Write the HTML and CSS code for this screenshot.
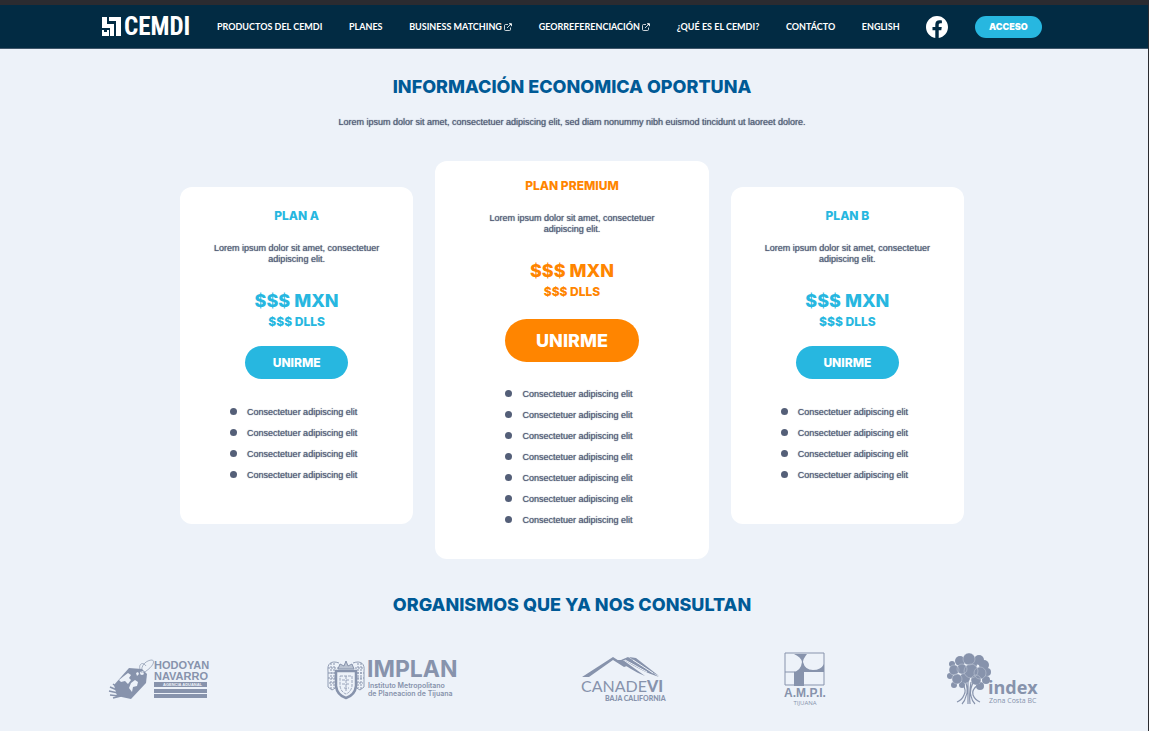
FILE: index.html
```html
<!DOCTYPE html>
<html lang="es">
<head>
<meta charset="utf-8">
<meta name="viewport" content="width=device-width, initial-scale=1">
<title>CEMDI - Planes</title>
<link rel="stylesheet" href="styles.css">
</head>
<body>
<svg class="defs" aria-hidden="true">
  <symbol id="external" viewBox="0 0 16 16">
    <path d="M8 3H3a2 2 0 0 0-2 2v8a2 2 0 0 0 2 2h8a2 2 0 0 0 2-2V9M6 10l8-8M10 1.500h5v5" fill="none" stroke="currentColor" stroke-width="1.600"/>
    <path d="M10 1h5v5z" fill="currentColor"/>
  </symbol>
</svg>
<header class="site-header">
  <nav class="nav" aria-label="Principal">
    <a class="brand" href="#" aria-label="CEMDI">
      <svg class="brand-mark" viewBox="0 0 20 20" aria-hidden="true">
        <path d="M0 0h5v7h7v12H8v-8H0zM7 0h12v19h-5V4H7zM0 13h2v2h3v-2h2v6H0z" fill="currentColor"/>
      </svg>
      <span class="brand-name">CEMDI</span>
    </a>
    <a class="nav-link" href="#">PRODUCTOS DEL CEMDI</a>
    <a class="nav-link" href="#">PLANES</a>
    <a class="nav-link" href="#">BUSINESS MATCHING <svg class="ext"><use href="#external"/></svg></a>
    <a class="nav-link" href="#">GEORREFERENCIACIÓN <svg class="ext"><use href="#external"/></svg></a>
    <a class="nav-link" href="#">¿QUÉ ES EL CEMDI?</a>
    <a class="nav-link" href="#">CONTÁCTO</a>
    <a class="nav-link" href="#">ENGLISH</a>
    <a class="social" href="#" aria-label="Facebook">
      <svg viewBox="0 0 24 24" aria-hidden="true"><path fill="currentColor" d="M24 12.073C24 5.446 18.627 0 12 0S0 5.446 0 12.073c0 6.026 4.388 11.020 10.125 11.927v-8.437H7.078v-3.490h3.047V9.413c0-3.026 1.792-4.697 4.533-4.697 1.312 0 2.686.236 2.686.236v2.971h-1.513c-1.491 0-1.956.931-1.956 1.886v2.264h3.328l-.532 3.490h-2.796V24C19.612 23.093 24 18.099 24 12.073z"/></svg>
    </a>
    <button class="access" type="button">ACCESO</button>
  </nav>
</header>

<main class="page">
  <h1 class="heading">INFORMACIÓN ECONOMICA OPORTUNA</h1>
  <p class="intro">Lorem ipsum dolor sit amet, consectetuer adipiscing elit, sed diam nonummy nibh euismod tincidunt ut laoreet dolore.</p>

  <section class="plans" aria-label="Planes">
    <article class="card">
      <h2 class="card-title">PLAN A</h2>
      <p class="card-text">Lorem ipsum dolor sit amet, consectetuer adipiscing elit.</p>
      <p class="price">$$$ MXN</p>
      <p class="price-alt">$$$ DLLS</p>
      <button class="join" type="button">UNIRME</button>
      <ul class="features">
        <li>Consectetuer adipiscing elit</li>
        <li>Consectetuer adipiscing elit</li>
        <li>Consectetuer adipiscing elit</li>
        <li>Consectetuer adipiscing elit</li>
      </ul>
    </article>
    <article class="card card-premium">
      <h2 class="card-title">PLAN PREMIUM</h2>
      <p class="card-text">Lorem ipsum dolor sit amet, consectetuer adipiscing elit.</p>
      <p class="price">$$$ MXN</p>
      <p class="price-alt">$$$ DLLS</p>
      <button class="join" type="button">UNIRME</button>
      <ul class="features">
        <li>Consectetuer adipiscing elit</li>
        <li>Consectetuer adipiscing elit</li>
        <li>Consectetuer adipiscing elit</li>
        <li>Consectetuer adipiscing elit</li>
        <li>Consectetuer adipiscing elit</li>
        <li>Consectetuer adipiscing elit</li>
        <li>Consectetuer adipiscing elit</li>
      </ul>
    </article>
    <article class="card">
      <h2 class="card-title">PLAN B</h2>
      <p class="card-text">Lorem ipsum dolor sit amet, consectetuer adipiscing elit.</p>
      <p class="price">$$$ MXN</p>
      <p class="price-alt">$$$ DLLS</p>
      <button class="join" type="button">UNIRME</button>
      <ul class="features">
        <li>Consectetuer adipiscing elit</li>
        <li>Consectetuer adipiscing elit</li>
        <li>Consectetuer adipiscing elit</li>
        <li>Consectetuer adipiscing elit</li>
      </ul>
    </article>
  </section>

  <h2 class="heading">ORGANISMOS QUE YA NOS CONSULTAN</h2>

  <section class="partners" aria-label="Organismos">
    <svg class="partner" width="100" height="56" viewBox="0 0 100 56" role="img" aria-label="Hodoyan Navarro">
      <path d="M20 16L33 17 38 22 37 31 22 47 8 44 5 33z" fill="currentColor"/>
      <path d="M15 24l4-3 3 2-2 3 2 2-3 4-3-3-4 1-2-2zM22 31l4-3 3 2-1 4-4 1-1 5-3-4zM27 21l2-1 1 2-2 2z" fill="#edf2f9"/>
      <circle cx="33" cy="21" r="2" fill="#edf2f9"/>
      <path d="M33 21C31 13 38 8 43 8c4 1 0 8-9 13M32 20C28 12 34 9 37 14" fill="none" stroke="currentColor" stroke-width=".7"/>
      <path d="M1 35l7 3M0 39l9 2M1 43l9 1M4 32l5 4M4 46l8-2" stroke="currentColor" stroke-width="1.500"/>
      <text x="45" y="17" class="t-bold" font-size="11">HODOYAN</text>
      <text x="45" y="28" class="t-bold" font-size="11">NAVARRO</text>
      <path d="M45 30h53v5H45zM45 37h53v4H45zM45 42h53v4H45z" fill="currentColor"/>
      <text x="54" y="34" class="t-bold t-light" font-size="4">AGENCIA ADUANAL</text>
    </svg>
    <svg class="partner" width="136" height="56" viewBox="0 0 136 56" role="img" aria-label="IMPLAN Instituto Metropolitano de Planeacion de Tijuana">
      <g fill="none" stroke="currentColor">
        <path d="M12 11C4 8 0 12 1 19v16l4 3 5-3M26 11c8-3 12 1 11 8v16l-4 3-5-3" stroke-width=".9"/>
        <path d="M1 16h10M1 21h8M1 26h8M2 31h7M28 16h9M30 21h7M30 26h7M29 31h7M4 11v26M7 11v25M31 11v25M34 11v26" stroke-dasharray="2 1"/>
        <path d="M9 19v15q1 9 10 12q9-3 10-12V19z" stroke-width="2.500"/>
        <path d="M13 24h12v10q-1 6-6 8q-5-2-6-8zM15 28h8M15 32h7M17 36h5M19 24v15" stroke-dasharray="3 1" stroke-width=".8"/>
        <path d="M11 17l2-5 4 2 2-5 2 5 4-2 2 5z" fill="currentColor" fill-opacity=".5"/>
      </g>
      <text x="40" y="25" class="t-heavy" font-size="23">IMPLAN</text>
      <text x="41" y="36" class="t-semi" font-size="7">Instituto Metropolitano</text>
      <text x="41" y="44" class="t-semi" font-size="7">de Planeacion de Tijuana</text>
    </svg>
    <svg class="partner" width="84" height="56" viewBox="0 0 84 56" role="img" aria-label="Canadevi Baja California">
      <path d="M1 25L32 5l14 9-3 1-11-7L8 25zM40 8l7-3 31 20C65 21 53 14 43 8zM48 5l7 1 23 18C68 19 58 12 48 5zM36 8l6 0 22 16C54 20 45 14 36 8z" fill="currentColor"/>
      <path d="M44 8l22 12M52 8l20 13" stroke="#edf2f9"/>
      <text x="0" y="40" class="t-geo" font-size="16">CANADE<tspan class="t-vi">VI</tspan></text>
      <text x="24" y="49" class="t-black" font-size="7">BAJA CALIFORNIA</text>
    </svg>
    <svg class="partner" width="44" height="56" viewBox="0 0 44 56" role="img" aria-label="A.M.P.I. Tijuana">
      <path d="M11 2h13Q20 7 20 10Q22 18 30 18Q38 18 41 12V20H21V34H11V20Q18 18 19 10Q18 5 11 2z" fill="currentColor"/>
      <path d="M2 1h39v32H2zM2 20h10" fill="none" stroke="currentColor"/>
      <text x="22" y="45" text-anchor="middle" class="t-bold" font-size="12">A.M.P.I.</text>
      <text x="22" y="53" text-anchor="middle" class="t-reg" font-size="6">TIJUANA</text>
    </svg>
    <svg class="partner" width="92" height="56" viewBox="0 0 92 56" role="img" aria-label="index Zona Costa BC">
      <g fill="currentColor">
        <circle cx="24" cy="7" r="6"/><circle cx="15" cy="9" r="5"/><circle cx="7" cy="12" r="3"/><circle cx="34" cy="8" r="5"/><circle cx="39" cy="13" r="5"/>
        <circle cx="9" cy="18" r="5"/><circle cx="17" cy="17" r="5"/><circle cx="26" cy="19" r="7"/><circle cx="35" cy="21" r="6"/><circle cx="42" cy="20" r="4"/>
        <circle cx="5" cy="24" r="3"/><circle cx="12" cy="27" r="5"/><circle cx="20" cy="26" r="5"/><circle cx="31" cy="28" r="5"/><circle cx="41" cy="28" r="4"/>
        <circle cx="9" cy="33" r="3"/><circle cx="17" cy="33" r="3"/><circle cx="35" cy="34" r="4"/><circle cx="28" cy="12" r="4"/>
      </g>
      <g fill="none" stroke="#edf2f9" stroke-width=".6" opacity=".5">
        <circle cx="26" cy="19" r="7"/><circle cx="17" cy="17" r="5"/><circle cx="35" cy="21" r="6"/><circle cx="24" cy="7" r="6"/><circle cx="9" cy="18" r="5"/><circle cx="31" cy="28" r="5"/><circle cx="12" cy="27" r="5"/>
      </g>
      <path d="M17 30q5 9 2 13q-2 5-7 7M20 28q4 11 1 16q-1 5-4 8M23 27v25M29 29q-5 9-3 15q1 5 4 8M34 32q-8 6-6 11q2 5 7 7M26 30q-2 12-1 22" fill="none" stroke="currentColor" stroke-width="1.200"/>
      <text x="43" y="42" class="t-open" font-size="18">index</text>
      <text x="44" y="51" class="t-reg" font-size="7">Zona Costa BC</text>
    </svg>
  </section>
</main>
</body>
</html>
```
FILE: styles.css
```css
:root {
  --navy: #022b43;
  --blue: #005a96;
  --cyan: #27b7e0;
  --orange: #ff8500;
  --slate: #545f78;
  --sky: #edf2f9;
}

* { box-sizing: border-box; }

body {
  margin: 0;
  min-height: 100vh;
  border-right: 1px solid #2b2b30;
  background: var(--sky);
  color: var(--slate);
  font: 9px/11px "Liberation Sans", Arial, sans-serif;
}

h1, h2, p, ul { margin: 0; padding: 0; }
button { border: 0; cursor: pointer; font-family: inherit; }
.defs { display: none; }

.site-header {
  padding: 0 106px 0 102px;
  border-top: 5px solid #2b2b30;
  border-bottom: 1px solid #3f566a;
  background: var(--navy);
}

.nav {
  display: flex;
  align-items: center;
  justify-content: space-between;
  height: 43px;
  color: #fff;
}

.nav a { color: inherit; text-decoration: none; white-space: nowrap; }

.brand { display: flex; align-items: center; gap: 2px; }
.brand-mark { width: 20px; height: 20px; }
.brand-name { font: bold 25px/26px "Liberation Sans Narrow", "Roboto Condensed", Roboto, sans-serif; }

.nav-link { font: 700 9px/12px Lato, sans-serif; }
.ext { width: 8px; height: 8px; vertical-align: -1px; }

.social { display: flex; }
.social svg { width: 22px; height: 22px; }

.access {
  width: 67px;
  height: 22px;
  padding: 0;
  border-radius: 11px;
  background: var(--cyan);
  color: #fff;
  font: 900 9px/12px Inter, sans-serif;
}

.page { padding: 26px 4px 24px 0; text-align: center; }

.heading {
  color: var(--blue);
  font: 800 18px/24px Inter, sans-serif;
}

.intro { margin-top: 18px; }

.intro, .card-text, .features li { text-shadow: 0 0 1px currentColor; }

.plans {
  display: grid;
  grid-template-columns: 29fr 34fr 29fr;
  align-items: start;
  gap: 22px;
  max-width: 784px;
  margin: 33px auto 34px;
}

.card {
  --accent: var(--cyan);
  display: flex;
  flex-direction: column;
  align-items: center;
  margin-top: 26px;
  padding: 21px 30px 43px;
  border-radius: 12px;
  background: #fff;
}

.card-premium {
  --accent: var(--orange);
  margin-top: 0;
  padding: 17px 51px 33px;
}

.card-title, .price-alt {
  color: var(--accent);
  font: 800 12px/16px Inter, sans-serif;
}

.card-text { margin-top: 19px; }

.price {
  margin: 25px 0 2px;
  color: var(--accent);
  font: 800 18px/22px Inter, sans-serif;
}

.join {
  width: 103px;
  height: 33px;
  margin-top: 16px;
  padding: 0;
  border-radius: 22px;
  background: var(--accent);
  color: #fff;
  font: 800 12px/16px Inter, sans-serif;
}

.card-premium .join {
  width: 134px;
  height: 43px;
  margin-top: 19px;
  font-size: 18px;
}

.features {
  display: grid;
  gap: 10px;
  margin-top: 28px;
  padding-right: 6px;
  list-style: none;
}

.features li { display: flex; gap: 10px; }

.features li::before {
  content: "";
  width: 7px;
  height: 7px;
  margin-top: 1px;
  border-radius: 50%;
  background: var(--slate);
}

.card-premium .features { margin-top: 27px; }

.partners {
  display: flex;
  justify-content: space-between;
  max-width: 930px;
  margin: 35px auto 0;
  padding-left: 2px;
  color: #8793ac;
}

.partner { fill: currentColor; overflow: visible; }
.t-bold { font-family: "Liberation Sans", sans-serif; font-weight: 700; }
.t-light { fill: var(--sky); }
.t-heavy { font-family: Inter, sans-serif; font-weight: 700; }
.t-semi { font-family: Inter, sans-serif; font-weight: 600; }
.t-geo { font-family: Lato, sans-serif; font-weight: 400; }
.t-vi { font-weight: 900; }
.t-black { font-family: Lato, sans-serif; font-weight: 900; }
.t-reg { font-family: "Open Sans", sans-serif; font-weight: 400; }
.t-open { font-family: "Open Sans", sans-serif; font-weight: 700; }
```
